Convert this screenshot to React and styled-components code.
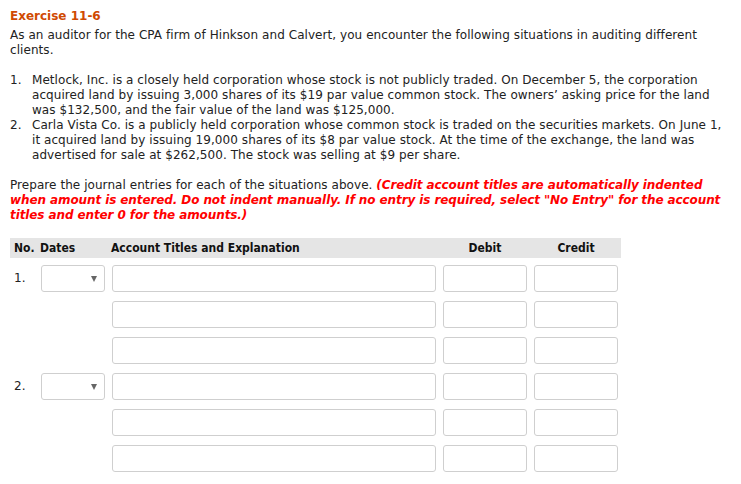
import styled, { createGlobalStyle } from "styled-components";

const GlobalStyle = createGlobalStyle`
  body {
    margin: 0;
    background: #fff;
    font-family: "DejaVu Sans", Verdana, sans-serif;
    font-size: 12px;
    letter-spacing: 0.06px;
    color: #222;
  }
`;

const Page = styled.div`
  padding: 8px 10px 0 10px;
  width: 720px;
  box-sizing: content-box;
`;

const Title = styled.h2`
  margin: 0 0 4px 0;
  font-size: 12px;
  line-height: 16px;
  font-weight: bold;
  letter-spacing: 0;
  color: #d04a02;
`;

const Para = styled.p`
  margin: 0 0 15px 0;
  line-height: 15px;
`;

const Notice = styled.span`
  color: #f00;
  font-weight: bold;
  font-style: italic;
  letter-spacing: -0.1px;
`;

const List = styled.ol`
  margin: 0 0 15px 0;
  padding: 0;
  list-style: none;
`;

const Item = styled.li`
  display: flex;
  line-height: 15px;
`;

const ItemNo = styled.span`
  flex: 0 0 22px;
`;

const Journal = styled.div`
  display: grid;
  grid-template-columns: 20px 64px 324px 84px 84px;
  column-gap: 7px;
  row-gap: 9px;
  width: 611px;
  padding: 0 3px 0 4px;
  box-sizing: border-box;
`;

const Head = styled.div`
  grid-column: 1 / -1;
  display: grid;
  grid-template-columns: subgrid;
  align-items: center;
  height: 20px;
  margin: 0 -3px -2px -4px;
  padding: 0 3px 0 4px;
  background: #e5e5e5;
  font-family: "DejaVu Sans Condensed", "DejaVu Sans", sans-serif;
  font-size: 12px;
  font-weight: bold;
  letter-spacing: 0;
  color: #111;
`;

const HeadCell = styled.div`
  white-space: nowrap;
  text-align: ${(p) => (p.$center ? "center" : "left")};
  margin-left: ${(p) => p.$shift || 0}px;
`;

const RowNo = styled.div`
  display: flex;
  align-items: center;
  height: 27px;
  white-space: nowrap;
  padding-bottom: 2px;
  box-sizing: border-box;
`;

const Field = styled.div`
  height: 27px;
  border: 1px solid #cfcfcf;
  border-radius: 3px;
  background: #fff;
  box-sizing: border-box;
`;

const Select = styled(Field)`
  grid-column: 2;
  position: relative;
  &::after {
    content: "";
    position: absolute;
    right: 7px;
    top: 10px;
    border-left: 3px solid transparent;
    border-right: 3px solid transparent;
    border-top: 6px solid #666;
  }
`;

const Account = styled(Field)`
  grid-column: 3;
`;

const entries = [
  { no: "1.", lines: 3 },
  { no: "2.", lines: 3 },
];

export default function App() {
  return (
    <>
      <GlobalStyle />
      <Page>
        <Title>Exercise 11-6</Title>
        <Para>
          As an auditor for the CPA firm of Hinkson and Calvert, you encounter the following
          situations in auditing different clients.
        </Para>
        <List>
          <Item>
            <ItemNo>1.</ItemNo>
            <span>
              Metlock, Inc. is a closely held corporation whose stock is not publicly traded. On
              December 5, the corporation acquired land by issuing 3,000 shares of its $19 par value
              common stock. The owners’ asking price for the land was $132,500, and the fair value
              of the land was $125,000.
            </span>
          </Item>
          <Item>
            <ItemNo>2.</ItemNo>
            <span>
              Carla Vista Co. is a publicly held corporation whose common stock is traded on the
              securities markets. On June 1, it acquired land by issuing 19,000 shares of its $8 par
              value stock. At the time of the exchange, the land was advertised for sale at
              $262,500. The stock was selling at $9 per share.
            </span>
          </Item>
        </List>
        <Para>
          Prepare the journal entries for each of the situations above.{" "}
          <Notice>
            (Credit account titles are automatically indented when amount is entered. Do not
            indent manually. If no entry is required, select "No Entry" for the account titles and
            enter 0 for the amounts.)
          </Notice>
        </Para>
        <Journal>
          <Head>
            <HeadCell>No.</HeadCell>
            <HeadCell $shift={-1}>Dates</HeadCell>
            <HeadCell $shift={-1}>Account Titles and Explanation</HeadCell>
            <HeadCell $center>Debit</HeadCell>
            <HeadCell $center>Credit</HeadCell>
          </Head>
          {entries.map((entry) =>
            Array.from({ length: entry.lines }).map((_, i) => (
              <Line key={entry.no + i} no={i === 0 ? entry.no : null} />
            ))
          )}
        </Journal>
      </Page>
    </>
  );
}

function Line({ no }) {
  return (
    <>
      {no && <RowNo>{no}</RowNo>}
      {no && <Select />}
      <Account />
      <Field />
      <Field />
    </>
  );
}
